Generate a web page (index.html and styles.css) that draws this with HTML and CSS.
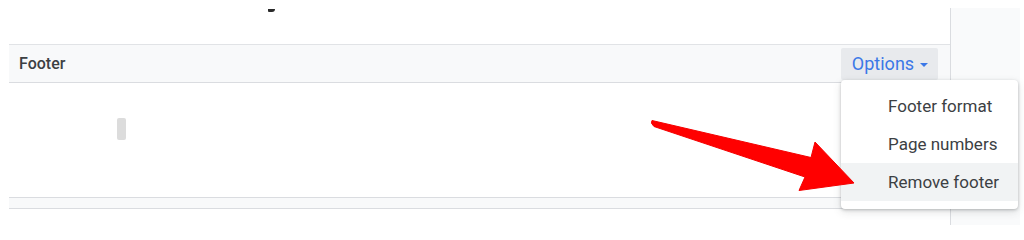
FILE: index.html
```html
<!DOCTYPE html>
<html>
<head>
<meta charset="utf-8">
<link rel="stylesheet" href="styles.css">
</head>
<body>
<div class="page">
  <div class="main">
    <div class="top"><span class="mark"></span></div>
    <div class="header">
      <span class="title">Footer</span>
      <button class="options">Options <span class="caret"></span></button>
    </div>
    <div class="content"><span class="cursor"></span></div>
    <div class="band"></div>
  </div>
  <div class="side"></div>
</div>
<div class="menu">
  <div class="item">Footer format</div>
  <div class="item">Page numbers</div>
  <div class="item active">Remove footer</div>
</div>
<svg class="arrow" width="1024" height="240" viewBox="0 0 1024 240">
  <path d="M652 120.5 Q650 123 654 126.5 L805 177 L799 190.5 L854 183 L815 142 L811 157.5 Z" fill="#ff0000" stroke="#f50000" stroke-width="1" stroke-linejoin="round"/>
</svg>
</body>
</html>
```
FILE: styles.css
```css
html, body {
  margin: 0;
  padding: 0;
  background: #ffffff;
  width: 1024px;
  height: 240px;
  overflow: hidden;
  font-family: Roboto, "Liberation Sans", Arial, sans-serif;
}
.page {
  display: flex;
  padding-top: 8px;
}
.main {
  width: 941px;
  margin-left: 9px;
  display: flex;
  flex-direction: column;
}
.top {
  height: 36px;
  position: relative;
}
.mark {
  display: block;
  width: 7px;
  height: 3px;
  margin-left: 259px;
  margin-top: 1px;
  background: #2a2a2a;
  border-radius: 0 0 3px 1px;
}
.header {
  height: 37px;
  border-top: 1px solid #e1e3e6;
  border-bottom: 1px solid #dadce0;
  background: #f8f9fa;
  display: flex;
  align-items: center;
  justify-content: space-between;
  padding-left: 10px;
  padding-right: 12px;
}
.title {
  font-size: 16px;
  font-weight: 500;
  color: #3c4043;
}
.options {
  height: 32px;
  width: 97px;
  border: none;
  background: #e8eaed;
  color: #3b78e7;
  font-family: inherit;
  font-size: 18px;
  padding: 0 0 0 1px;
  display: flex;
  align-items: center;
  justify-content: center;
  gap: 6px;
  border-radius: 2px;
}
.caret {
  width: 0;
  height: 0;
  border-left: 4.5px solid transparent;
  border-right: 4.5px solid transparent;
  border-top: 4.5px solid #3b78e7;
  margin-top: 2px;
}
.content {
  height: 114px;
  position: relative;
}
.cursor {
  display: block;
  width: 9px;
  height: 22px;
  margin-left: 108px;
  margin-top: 35px;
  background: #dcdcdc;
  border-radius: 2px;
}
.band {
  height: 10px;
  border-top: 1px solid #dadce0;
  border-bottom: 1px solid #dadce0;
  background: #f8f9fa;
}
.side {
  width: 69px;
  height: 217px;
  border-left: 1px solid #dadce0;
  background: #f9fafb;
}
.menu {
  position: absolute;
  left: 841px;
  top: 80px;
  width: 177px;
  padding: 7px 0 8px;
  background: #ffffff;
  border-radius: 4px;
  box-shadow: 0 1px 3px rgba(60,64,67,0.3), 0 3px 8px rgba(60,64,67,0.15);
}
.item {
  height: 38px;
  display: flex;
  align-items: center;
  padding-left: 47px;
  font-size: 17px;
  color: #3c4043;
}
.item.active {
  background: #f1f3f4;
}
.arrow {
  position: absolute;
  left: 0;
  top: 0;
}
```
